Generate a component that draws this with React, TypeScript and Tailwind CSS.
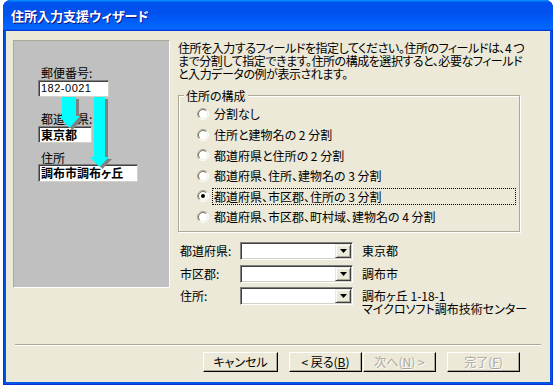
import React from "react";

const jp = "font-['MS_UI_Gothic','Noto_Sans_CJK_JP',sans-serif] [font-feature-settings:'palt']";

function Radio({ checked }: { checked?: boolean }) {
  return (
    <svg width="12" height="12" viewBox="0 0 12 12" className="shrink-0">
      <circle cx="6" cy="6" r="5" fill="#fff" />
      <path d="M2.1 9.9 A5.5 5.5 0 0 1 9.9 2.1" stroke="#ACA899" strokeWidth="1" fill="none" />
      <path d="M9.9 2.1 A5.5 5.5 0 0 1 2.1 9.9" stroke="#fff" strokeWidth="1" fill="none" />
      <path d="M2.8 9.2 A4.5 4.5 0 0 1 9.2 2.8" stroke="#716F64" strokeWidth="1" fill="none" />
      <path d="M9.2 2.8 A4.5 4.5 0 0 1 2.8 9.2" stroke="#F1EFE2" strokeWidth="1" fill="none" />
      {checked && <circle cx="6" cy="6" r="2" fill="#000" />}
    </svg>
  );
}

function Combo() {
  return (
    <div className="w-[113px] h-[18px] bg-white border border-[#808080] border-r-white border-b-white shadow-[inset_1px_1px_0_#404040,inset_-1px_-1px_0_#D4D0C8] flex justify-end p-[1px] shrink-0">
      <div className="w-[16px] h-full bg-[#ECE9D8] border border-[#ECE9D8] border-r-[#404040] border-b-[#404040] shadow-[inset_1px_1px_0_#fff,inset_-1px_-1px_0_#ACA899] flex items-center justify-center">
        <svg width="7" height="4" viewBox="0 0 7 4">
          <path d="M0 0 H7 L3.5 4 Z" fill="#000" />
        </svg>
      </div>
    </div>
  );
}

function WizButton({ children, width, disabled }: { children: React.ReactNode; width: string; disabled?: boolean }) {
  return (
    <div
      className={`${width} h-[20px] bg-[#ECE9D8] border border-white border-r-black border-b-black shadow-[inset_-1px_-1px_0_#ACA899] flex items-center justify-center text-[12px] leading-none ${
        disabled ? "text-[#ACA899] [text-shadow:1px_1px_0_#fff]" : "text-black"
      }`}
    >
      {children}
    </div>
  );
}

const options = [
  "分割なし",
  "住所と建物名の 2 分割",
  "都道府県と住所の 2 分割",
  "都道府県、住所、建物名の 3 分割",
  "都道府県、市区郡、住所の 3 分割",
  "都道府県、市区郡、町村域、建物名の 4 分割",
];

export default function App() {
  return (
    <div className={`w-[556px] h-[388px] bg-white ${jp}`}>
      <div className="ml-[3px] w-[550px] h-[385px] rounded-t-[8px] overflow-hidden flex flex-col bg-[#0054e3] shadow-[inset_0_0_0_1px_#0831d9]">
        {/* title bar */}
        <div className="h-[31px] shrink-0 bg-[linear-gradient(180deg,#0997ff,#0053ee_8%,#0050ee_40%,#0066ff_88%,#0066ff_93%,#005bff_95%,#003dd7_96%,#003dd7)] flex items-center pl-[8px]">
          <span className="text-white font-bold text-[13px] leading-none [text-shadow:1px_1px_0_#0f1089]">
            住所入力支援ウィザード
          </span>
        </div>

        {/* client area */}
        <div className="flex-1 mx-[3px] mb-[3px] bg-[#ECE9D8] flex flex-col text-black text-[12px] leading-[13px]">
          <div className="h-[313px] flex pl-[7px] pt-[9px]">
            {/* sample picture */}
            <div className="relative w-[157px] h-[248px] bg-[#C0C0C0] border border-[#ACA899] border-r-white border-b-white pl-[24px] pt-[24.5px] shrink-0">
              <div className="ml-[3px]">郵便番号:</div>
              <div className="mt-[1.5px] w-[71px] h-[17px] bg-white border border-[#808080] border-r-[#D4D0C8] border-b-[#D4D0C8] shadow-[inset_1px_1px_0_#404040] pl-[2px] text-[11px] leading-[15px] tracking-[0.5px] font-['Liberation_Sans',sans-serif]">
                182-0021
              </div>
              <div className="ml-[3px] mt-[14.5px]">都道府県:</div>
              <div className="mt-[1.5px] w-[54px] h-[17px] bg-white border border-[#808080] border-r-[#D4D0C8] border-b-[#D4D0C8] shadow-[inset_1px_1px_0_#404040] pl-[2px] font-bold text-[12px] leading-[15px]">
                東京都
              </div>
              <div className="ml-[3px] mt-[7.5px]">住所</div>
              <div className="mt-[0.5px] w-[100px] h-[18px] bg-white border border-[#808080] border-r-[#D4D0C8] border-b-[#D4D0C8] shadow-[inset_1px_1px_0_#404040] pl-[2px] font-bold text-[12px] leading-[16px]">
                調布市調布ヶ丘
              </div>
              <svg className="absolute left-0 top-0" width="155" height="246" viewBox="0 0 155 246">
                <g fill="#808080">
                  <path d="M51 58 H65 V77 H69 L58.5 89 L48 77 H51 Z" />
                  <path d="M83 58 H94 V118 H98 L88.5 128 L79 118 H83 Z" />
                </g>
                <g fill="#00FFFF">
                  <path d="M48 56 H62 V75 H66 L55.5 87 L45 75 H48 Z" />
                  <path d="M80 56 H91 V116 H95 L85.5 126 L76 116 H80 Z" />
                </g>
              </svg>
            </div>

            {/* right column */}
            <div className="ml-[8px] w-[342px] pt-[1px]">
              <div className="whitespace-nowrap text-[12px] tracking-[-0.45px]">
                住所を入力するフィールドを指定してください。住所のフィールドは、4 つ
                <br />
                まで分割して指定できます。住所の構成を選択すると、必要なフィールド
                <br />
                と入力データの例が表示されます。
              </div>

              <div className="relative mt-[15px] h-[137px] border border-[#ACA899] shadow-[inset_1px_1px_0_#fff,1px_1px_0_#fff] pl-[18px] pt-[7.7px]">
                <span className="absolute left-[5px] top-[-7px] px-[2px] bg-[#ECE9D8]">住所の構成</span>
                {options.map((o, i) => (
                  <div key={i} className="h-[20.6px] flex items-center">
                    <Radio checked={i === 4} />
                    <span
                      className={`ml-[3px] h-[17px] px-[1px] border border-dotted leading-[15px] whitespace-nowrap ${
                        i === 4 ? "border-black w-[304px]" : "border-transparent"
                      }`}
                    >
                      {o}
                    </span>
                  </div>
                ))}
              </div>

              <div className="mt-[10px] flex flex-col gap-[4.5px]">
                <div className="flex items-start">
                  <div className="w-[62px] shrink-0 pl-[2px] leading-[18px]">都道府県:</div>
                  <Combo />
                  <div className="ml-[9px] pt-[2px]">東京都</div>
                </div>
                <div className="flex items-start">
                  <div className="w-[62px] shrink-0 pl-[2px] leading-[18px]">市区郡:</div>
                  <Combo />
                  <div className="ml-[9px] pt-[2px]">調布市</div>
                </div>
                <div className="flex items-start">
                  <div className="w-[62px] shrink-0 pl-[2px] leading-[18px]">住所:</div>
                  <Combo />
                  <div className="ml-[9px] pt-[2px] whitespace-nowrap">
                    調布ヶ丘 1-18-1
                    <br />
                    マイクロソフト調布技術センター
                  </div>
                </div>
              </div>
            </div>
          </div>

          {/* divider */}
          <div className="mx-[9px] h-[2px] border-t border-[#ACA899] border-b border-b-white" />

          {/* buttons */}
          <div className="mt-[6px] flex pl-[197px]">
            <WizButton width="w-[75px]">キャンセル</WizButton>
            <div className="ml-[11px] flex gap-[1px]">
              <WizButton width="w-[73px]">
                &lt; 戻る(<u>B</u>)
              </WizButton>
              <WizButton width="w-[73px]" disabled>
                次へ(<u>N</u>) &gt;
              </WizButton>
            </div>
            <div className="ml-[11px]">
              <WizButton width="w-[73px]" disabled>
                完了(<u>F</u>)
              </WizButton>
            </div>
          </div>
        </div>
      </div>
    </div>
  );
}
